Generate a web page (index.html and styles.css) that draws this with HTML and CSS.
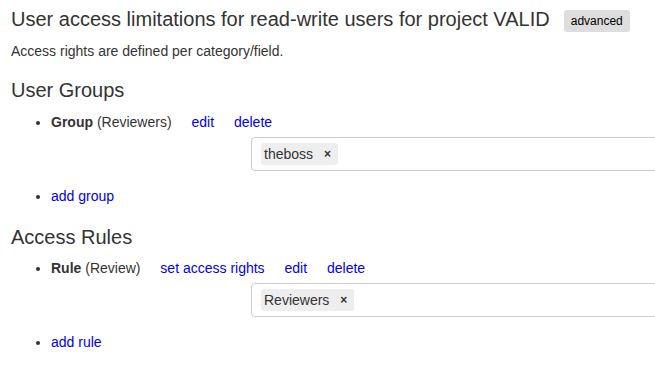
FILE: index.html
```html
<!DOCTYPE html>
<html>
<head>
<meta charset="utf-8">
<link rel="stylesheet" href="styles.css">
</head>
<body>
<div class="page">
  <h1 class="title"><span class="title-text">User access limitations for read-write users for project VALID</span><span class="badge">advanced</span></h1>
  <p class="intro">Access rights are defined per category/field.</p>

  <h2 class="section first">User Groups</h2>
  <ul class="items">
    <li class="item">
      <div class="line"><b>Group</b> (Reviewers) <a class="act" href="#">edit</a> <a class="act" href="#">delete</a></div>
      <div class="select"><span class="tag">theboss<span class="x">×</span></span></div>
    </li>
    <li class="item add"><a href="#">add group</a></li>
  </ul>

  <h2 class="section">Access Rules</h2>
  <ul class="items second">
    <li class="item">
      <div class="line"><b>Rule</b> (Review) <a class="act" href="#">set access rights</a> <a class="act" href="#">edit</a> <a class="act" href="#">delete</a></div>
      <div class="select"><span class="tag">Reviewers<span class="x">×</span></span></div>
    </li>
    <li class="item add"><a href="#">add rule</a></li>
  </ul>
</div>
</body>
</html>
```
FILE: styles.css
```css
html, body {
  margin: 0;
  padding: 0;
  overflow: hidden;
  background: #fff;
}
body {
  font-family: "Liberation Sans", Arial, sans-serif;
  font-size: 14px;
  line-height: 20px;
  color: #333;
}
.page {
  padding: 0 11px;
  overflow: hidden;
}
a {
  color: #0000ee;
  text-decoration: none;
}
.title {
  display: flex;
  align-items: flex-start;
  margin: 7px 0 0;
  font-weight: normal;
  font-size: 20px;
  line-height: 24px;
  white-space: nowrap;
}
.badge {
  margin: 3px 0 0 14px;
  padding: 0 7px;
  height: 22px;
  line-height: 22px;
  font-size: 12px;
  color: #000;
  background: #ddd;
  border-radius: 3px;
}
.intro {
  margin: 9px 0 0;
}
.section {
  margin: 20px 0 0;
  font-size: 20px;
  font-weight: normal;
  line-height: 22px;
}
.section.first {
  margin-top: 18px;
}
.items {
  margin: 11px 0 0;
  padding: 0 0 0 40px;
}
.items.second {
  margin-top: 10px;
}
.item + .item {
  margin-top: 15px;
}
.line {
  white-space: nowrap;
}
.line b {
  font-weight: bold;
}
.act {
  margin-left: 16px;
}
.select {
  margin: 5px 0 0 200px;
  width: 520px;
  height: 34px;
  box-sizing: border-box;
  border: 1px solid #ccc;
  border-radius: 4px;
  padding: 5px 9px;
  display: flex;
  align-items: flex-start;
}
.tag {
  display: inline-flex;
  align-items: center;
  height: 22px;
  padding: 0 7px 0 3px;
  background: #eee;
  border-radius: 3px;
  color: #333;
}
.x {
  margin-left: 11px;
  font-size: 12px;
  font-weight: bold;
  color: #333;
}
```
